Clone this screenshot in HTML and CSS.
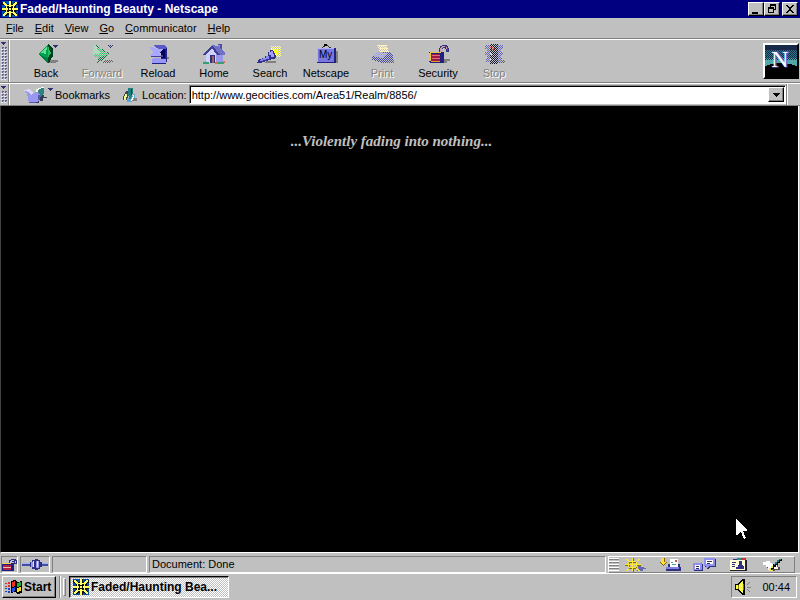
FILE: index.html
```html
<!DOCTYPE html>
<html lang="en">
<head>
    <meta charset="UTF-8">
    <meta name="viewport" content="width=device-width, initial-scale=1.0">
    <title>Faded/Haunting Beauty - Netscape</title>
    <link rel="stylesheet" href="styles.css">
</head>
<body>
    <!-- shared icon parts -->
    <svg class="defs" width="0" height="0" aria-hidden="true">
        <defs>
            <pattern id="dither" width="2" height="2" patternUnits="userSpaceOnUse">
                <path fill="#c0c0c0" d="M0 0h1v1h-1zM1 1h1v1h-1z"/>
            </pattern>
            <pattern id="sky" width="2" height="2" patternUnits="userSpaceOnUse">
                <path fill="#182848" d="M0 0h1v1h-1zM1 1h1v1h-1z"/>
            </pattern>
            <g id="helm">
                <path fill="#0050a8" d="M0 0h16v16h-16z"/>
                <path fill="#101008" d="M3 3h11v11h-11zM7 0h3v16h-3zM0 7h16v3h-16zM0 1h4v3h-4zM12 1h4v3h-4zM1 12h4v3h-4zM12 12h3v3h-3z"/>
                <path fill="#ffff66" d="M7 0h2v6h-2zM7 10h2v6h-2zM0 7h6v2h-6zM10 7h6v2h-6z"/>
                <path fill="#ffff66" d="M1 1h2v1h1v1h1v1h1v1h-1v1h-1v-1h-1v-1h-1v-1h-1zM15 1h-2v1h-1v1h-1v1h-1v1h1v1h1v-1h1v-1h1v-1h1zM1 15h2v-1h1v-1h1v-1h1v-1h-1v-1h-1v1h-1v1h-1v1h-1zM15 15h-2v-1h-1v-1h-1v-1h-1v-1h1v-1h1v1h1v1h1v1h1z"/>
                <path fill="#ffff66" d="M5 4h6v1h-6zM4 5h1v6h-1zM11 5h1v6h-1zM5 11h6v1h-6zM7 7h2v2h-2z"/>
            </g>
            <g id="drop"><path fill="#303070" d="M0 0h5v1h-1v1h-1v1h-1v-1h-1v-1h-1z"/></g>
        </defs>
    </svg>

    <header class="title-bar">
        <svg width="16" height="16" viewBox="0 0 16 16"><use href="#helm"/></svg>
        <h1>Faded/Haunting Beauty - Netscape</h1>
        <div class="window-buttons">
            <button aria-label="Minimize"><svg width="12" height="10" viewBox="0 0 12 10"><path d="M2 8h6v2h-6z"/></svg></button>
            <button aria-label="Restore"><svg width="12" height="10" viewBox="0 0 12 10"><path fill-rule="evenodd" d="M4 0h6v6h-2v3h-6v-6h2zM5 2v1h3v2h1v-3zM3 5v3h4v-3z"/></svg></button>
            <button class="close" aria-label="Close"><svg width="12" height="10" viewBox="0 0 12 10"><path d="M2 1h2v1h1v1h2v-1h1v-1h2v1h-1v1h-1v1h-1v2h1v1h1v1h1v1h-2v-1h-1v-1h-2v1h-1v1h-2v-1h1v-1h1v-1h1v-2h-1v-1h-1v-1h-1z"/></svg></button>
        </div>
    </header>

    <nav class="menu-bar">
        <a href="#"><u>F</u>ile</a>
        <a href="#"><u>E</u>dit</a>
        <a href="#"><u>V</u>iew</a>
        <a href="#"><u>G</u>o</a>
        <a href="#"><u>C</u>ommunicator</a>
        <a href="#"><u>H</u>elp</a>
    </nav>

    <div class="toolbar">
        <div class="grip"><svg width="5" height="3" viewBox="0 0 5 3"><use href="#drop"/></svg></div>
        <div class="nav-buttons">
            <button>
                <svg width="26" height="22" viewBox="0 0 26 22">
                    <path fill="#808080" d="M17 17h8v2h-2v1h-9z"/>
                    <path fill="#00a050" d="M15 1L5 11L15 15z"/>
                    <path fill="#60e090" d="M14 3L8 10L13 11z"/>
                    <path fill="#008040" d="M5 11L15 15V21z"/>
                    <path fill="#004020" d="M15 1L20 6V13L15 21V14z"/>
                    <path fill="#20c060" d="M15 3L18 10L15 15z"/>
                    <use href="#drop" x="20" y="2"/>
                </svg>
                Back
            </button>
            <button disabled>
                <svg width="26" height="22" viewBox="0 0 26 22">
                    <path fill="#606060" d="M15 17h9v2h-2v1h-10z"/>
                    <path fill="#40d078" d="M5 1L21 11L8 21L9 15L4 12z"/>
                    <path fill="#a0f0c0" d="M5 1L12 10L4 12z"/>
                    <path fill="#107038" d="M9 15L21 11L8 21z"/>
                    <path fill="none" stroke="#107038" d="M6 2L20 11"/>
                    <use href="#drop" x="19" y="2"/>
                    <path fill="url(#dither)" d="M0 0h26v22h-26z"/>
                </svg>
                Forward
            </button>
            <button>
                <svg width="26" height="22" viewBox="0 0 26 22">
                    <path fill="#808080" d="M19 14h5v2h-2v2h-5z"/>
                    <path fill="#202080" d="M15 3h6v1h1v15h-2v1h-5v-4h1v-6h-1z"/>
                    <path fill="#000060" d="M16 6h4v9h-4z"/>
                    <path fill="#5858c8" d="M9 2h11l2 3l-5 2l-7-3z"/>
                    <path fill="#a8a8ff" d="M3 4h5l4 2h6l-3 4l1 3h-11l3-4z"/>
                    <path fill="#404098" d="M5 13h11v-1h2v2h-12z"/>
                    <path fill="#9898f8" d="M8 15h7v1h6v4h-14v-4h1z"/>
                    <path fill="#202080" d="M7 20h14v1h-14z"/>
                </svg>
                Reload
            </button>
            <button>
                <svg width="26" height="22" viewBox="0 0 26 22">
                    <path fill="#5050a0" d="M17 1h4v8h-4z"/>
                    <path fill="#9090e8" d="M17 2h2v6h-2z"/>
                    <path fill="#d0d0ff" d="M5 11L11 4L17 11V20H5z"/>
                    <path fill="#9898e8" d="M15 11L22 10V19L15 20z"/>
                    <path fill="#7070c8" d="M11 2L17 3L24 10V12H18z"/>
                    <path fill="#404090" d="M11 2L2 11V12H5L11 5L16 12H19z"/>
                    <path fill="#303078" d="M9 12h5v8h-5z"/>
                    <path fill="#a06060" d="M11 13h2v7h-2z"/>
                    <path fill="#30a070" d="M2 19h6v2h-6zM16 19h7v2h-7z"/>
                    <path fill="#e07040" d="M4 18h1v2h-1zM14 19h3v2h-3zM22 18h2v2h-2z"/>
                </svg>
                Home
            </button>
            <button>
                <svg width="26" height="22" viewBox="0 0 26 22">
                    <path fill="#ffff90" d="M14 3h10v11h-10z"/>
                    <path fill="#ffff30" d="M17 6h5v6h-5z"/>
                    <path fill="url(#dither)" d="M14 2h11v4h-11zM21 4h4v10h-4zM16 12h8v3h-8z"/>
                    <path fill="#808080" d="M9 18h10v2h-12z"/>
                    <path fill="#303088" d="M2 16h3v-1h3v-2h3v-4h2v-2h3v1h1v2h1v2h1v3h-1v1h-4v1h-3v1h-3v1h-3v1h-5z"/>
                    <path fill="#8888f0" d="M4 16h2v-1h3v-2h3v3h-3v1h-3v1h-3z"/>
                    <path fill="#a0a0ff" d="M12 9h2v-1h2v3h1v3h-3v-2h-2z"/>
                </svg>
                Search
            </button>
            <button>
                <svg width="26" height="22" viewBox="0 0 26 22">
                    <path fill="none" stroke="#303030" d="M9 5L13 2L18 5"/>
                    <path fill="#000" d="M11 1h3v2h-3z"/>
                    <path fill="#808080" d="M8 8h17v12h-17z"/>
                    <path fill="#202080" d="M4 5h19v15h-19z"/>
                    <path fill="#b0b0ff" d="M4 5h17v14h-17z"/>
                    <path fill="#7878e0" d="M5 6h16v13h-16z"/>
                    <text class="my-label" x="6" y="15">My</text>
                </svg>
                Netscape
            </button>
            <button disabled>
                <svg width="26" height="22" viewBox="0 0 26 22">
                    <path fill="#606060" d="M14 17h11v3h-13z"/>
                    <path fill="#fff8d0" d="M8 2h10l2 8h-9z"/>
                    <path fill="#4848a8" d="M3 13L9 9H21L24 12V17L15 20L3 17z"/>
                    <path fill="#a0a0f0" d="M3 13L9 9L18 10L14 15z"/>
                    <path fill="url(#dither)" d="M0 0h26v22h-26z"/>
                    <path fill="#fff0b0" d="M8 2h9v1h-9zM10 5h8v1h-8zM11 8h8v1h-8z"/>
                </svg>
                Print
            </button>
            <button>
                <svg width="26" height="22" viewBox="0 0 26 22">
                    <path fill="#808080" d="M18 16h7v2h-3v2h-6z"/>
                    <path fill="#303080" d="M14 10v-5h1v-2h2v-1h5v1h1v2h1v4h-3v-3h-1v-1h-2v1h-1v4z"/>
                    <path fill="#d0a0a8" d="M15 9v-4h1v-1h1v-1h3v1h-2v1h-1v4zM21 4h1v2h-1z"/>
                    <path fill="#c02040" d="M20 3h1v1h-1zM22 5h1v3h-1z"/>
                    <path fill="#202080" d="M4 9h15v11h-14l-1-1z"/>
                    <path fill="#e8c840" d="M5 9h11v1h-11zM4 10h2v8h-2z"/>
                    <path fill="#a01848" d="M6 11h9v8h-9z"/>
                    <path fill="#d87080" d="M7 12h8v1h-8zM7 15h8v1h-8z"/>
                    <path fill="#e8a020" d="M6 18h9v1h-9z"/>
                </svg>
                Security
            </button>
            <button disabled>
                <svg width="26" height="22" viewBox="0 0 26 22">
                    <path fill="#606060" d="M18 17h6v3h-9z"/>
                    <path fill="#6868c0" d="M4 2h18v4h-2v3h2v3h-2v3h1v4h-16v-4h1v-3h-2v-3h2v-3h-2z"/>
                    <path fill="#181830" d="M9 1h8v20h-8z"/>
                    <path fill="url(#dither)" d="M0 0h26v22h-26z"/>
                    <path fill="#e04030" d="M9 4h3v1h-3zM10 6h3v1h-3zM12 5h2v1h-2z"/>
                    <path fill="#e0e0e0" d="M9 9h1v2h-1zM10 11h1v1h-1zM9 15h1v2h-1zM11 17h1v1h-1z"/>
                </svg>
                Stop
            </button>
        </div>
        <div class="throbber">
            <svg width="32" height="32" viewBox="0 0 32 32">
                <path fill="#182848" d="M0 0h32v32h-32z"/>
                <path fill="#287888" d="M0 5h32v27h-32z"/>
                <path fill="#50a8a8" d="M0 13h32v19h-32z"/>
                <path fill="url(#sky)" d="M0 4h32v11h-32z"/>
                <path fill="#000" d="M0 21Q16 15 32 21V32H0z"/>
                <text class="shade" x="7" y="22">N</text>
                <text x="6" y="22">N</text>
            </svg>
        </div>
    </div>

    <div class="location-bar">
        <div class="grip"><svg width="5" height="3" viewBox="0 0 5 3"><use href="#drop"/></svg></div>
        <button class="bookmarks">
            <svg width="30" height="18" viewBox="0 0 30 18">
                <path fill="#383858" d="M15 9h6v2h3v1h-4v3h-4v2h-4z"/>
                <path fill="#308080" d="M15 4L21 1V7L17 11L14 13z"/>
                <path fill="#f0fff0" d="M13 3h2v-1h3v-1h3v1h-3v1h-2v1h-1v5h-2z"/>
                <path fill="#9898f0" d="M0 4L7 3L10 7L14 6L17 9V15L12 16L6 17L4 8z"/>
                <path fill="#d8d8ff" d="M0 4L7 3L10 7L9 9L5 6z"/>
                <path fill="#5858b8" d="M15 9h2v5h-2zM6 16h7v1h-7z"/>
                <use href="#drop" x="25" y="2"/>
            </svg>
            Bookmarks
        </button>
        <svg class="page-proxy" width="16" height="16" viewBox="0 0 16 16">
            <path fill="#808080" d="M11 11h4v3h-6z"/>
            <path fill="#404850" d="M4 4h2v9h-5v-4h1v-2h1v-2h1z"/>
            <path fill="#f8f890" d="M3 7h2v3h-1v3h-2v-4h1z"/>
            <path fill="#58a8d8" d="M5 11h2v1h2v-3h2v-2h2v4h-1v2h-2v2h-5z"/>
            <path fill="#fff" d="M10 10h1v-2h1v3h-1v2h-1v1h-1z"/>
            <path fill="#208080" d="M6 1h5v6h-1v3h-1v2h-2v-3h-1z"/>
            <path fill="#004848" d="M9 2h1v6h-1z"/>
        </svg>
        <label for="url">Location:</label>
        <div class="url-box">
            <input type="text" id="url" value="http://www.geocities.com/Area51/Realm/8856/">
            <button aria-label="History"><svg width="7" height="4" viewBox="0 0 7 4"><path d="M0 0h7v1h-1v1h-1v1h-1v1h-1v-1h-1v-1h-1v-1h-1z"/></svg></button>
        </div>
        <div class="bar-end"></div>
    </div>

    <main class="page">
        <p>...Violently fading into nothing...</p>
    </main>

    <footer class="status-bar">
        <div class="cell lock">
            <svg width="15" height="14" viewBox="0 0 15 14">
                <path fill="#303080" d="M7 6v-4h2v-1h5v1h1v4h-3v-2h-2v2z"/>
                <path fill="#c0c0f0" d="M8 5v-2h1v-1h3v1h-2v2zM13 3h1v2h-1z"/>
                <path fill="#202080" d="M0 5h12v8h-12z"/>
                <path fill="#f0d050" d="M0 5h9v1h-9z"/>
                <path fill="#b02048" d="M1 7h8v5h-8z"/>
                <path fill="#f0c0a0" d="M1 9h8v1h-8z"/>
            </svg>
        </div>
        <div class="cell plug">
            <svg width="26" height="14" viewBox="0 0 26 14">
                <path fill="#4050a0" d="M0 6h26v2h-26z"/>
                <path fill="#a0b0ff" d="M0 5h26v1h-26z"/>
                <path fill="#303080" d="M8 4h2v-2h3v-1h3v1h2v2h2v5h-2v2h-2v1h-3v-1h-3v-2h-2z"/>
                <path fill="#9898f0" d="M9 4h3v5h-3zM14 3h3v7h-3z"/>
                <path fill="#e0e0ff" d="M11 3h1v6h-1zM15 3h1v6h-1z"/>
            </svg>
        </div>
        <div class="cell progress"></div>
        <div class="cell message">Document: Done</div>
        <div class="component-bar">
            <span class="component-grip"></span>
            <button aria-label="Navigator">
                <svg width="24" height="14" viewBox="0 0 24 14">
                    <path fill="#6868b0" d="M14 8h3v1h3v1h2v1h-3v2h-6z"/>
                    <path fill="#807000" d="M9 0h1v14h-1zM1 7h16v1h-16zM5 4h8v7h-8z"/>
                    <path fill="#c0c0c0" d="M6 5h6v5h-6z"/>
                    <path fill="#ffe830" d="M8 0h1v13h-1zM1 6h16v1h-16zM5 3h7v1h-7zM5 9h7v1h-7zM4 4h1v5h-1zM12 4h1v5h-1zM2 1h2v1h1v1h-2v-1h-1zM13 2h1v-1h2v1h-1v1h-2zM2 12h1v-1h2v1h-1v1h-2zM12 10h2v1h1v1h1v1h-2v-1h-1v-1h-1z"/>
                </svg>
            </button>
            <button aria-label="Inbox">
                <svg width="24" height="14" viewBox="0 0 24 14">
                    <path fill="#806000" d="M3 0h4v4h2l-4 4l-4-4h2z"/>
                    <path fill="#ffe030" d="M3 0h3v4h2l-3 3l-3-3h1z"/>
                    <path fill="#303080" d="M8 9h2v-3h12v3h1v4h-15z"/>
                    <path fill="#8080e0" d="M8 9h13v2h-13z"/>
                    <path fill="#fff" d="M12 1h8v8h-8z"/>
                    <path fill="#d05060" d="M17 2h2v2h-2z"/>
                    <path fill="#50a090" d="M13 4h2v1h-2zM14 6h4v1h-4z"/>
                </svg>
            </button>
            <button aria-label="Discussions">
                <svg width="24" height="14" viewBox="0 0 24 14">
                    <path fill="#303080" d="M2 6h9v7h-9zM13 1h11v8h-6v1h-1v1h-2v-2h-2z"/>
                    <path fill="#9090f0" d="M1 5h8v-1h1v8h-9zM12 0h11v8h-6v1h-1v1h-2v-2h-2z"/>
                    <path fill="#fff" d="M3 7h5v4h-5zM14 2h7v4h-7z"/>
                    <path fill="#303060" d="M4 8h3v1h-3zM4 10h3v1h-3zM15 3h5v1h-5zM15 5h3v1h-3z"/>
                </svg>
            </button>
            <button aria-label="Address Book">
                <svg width="24" height="14" viewBox="0 0 24 14">
                    <path fill="#202030" d="M4 2h17v11h-17z"/>
                    <path fill="#ffffd8" d="M4 2h15v10h-15z"/>
                    <path fill="#303080" d="M7 1h4v1h-4z"/><path fill="#209090" d="M11 0h4v2h-4z"/><path fill="#d03030" d="M15 0h5v2h-5z"/>
                    <path fill="#303080" d="M6 4h4v1h-4zM6 6h3v1h-3zM6 8h3v1h-3zM13 3h3v4h-3zM12 7h5v1h1v3h-8v-2h2z"/>
                </svg>
            </button>
            <button aria-label="Composer">
                <svg width="24" height="14" viewBox="0 0 24 14">
                    <path fill="#505050" d="M6 6h12v3h2v3h-5v1h-6v-3h-2z"/>
                    <path fill="#fff" d="M3 4h3v-1h4v2h2v1h5v3h1v2h-6v1h-4v-3h-2v-2h-3z"/>
                    <path fill="#000" d="M19 1h3v2h-2v2h-2v2h-2v2h-2v2h-2v2h-2v-3h1v-2h2v-2h2v-2h2v-2h2z"/>
                    <path fill="#208080" d="M19 1h2v1h-2v2h-2v2h-2v1h-1v-1h1v-2h2v-2h2z"/>
                    <path fill="#ffe830" d="M11 8h2v2h-2v2h2v1h-4v-3h2z"/>
                </svg>
            </button>
        </div>
    </footer>

    <div class="taskbar">
        <button class="start">
            <svg width="18" height="16" viewBox="0 0 18 16">
                <path fill="#000" d="M6 2L10 1L13 3L17 2V14L13 15L10 13L6 14z"/>
                <path fill="#f03020" d="M7 3L10 2V7L7 8z"/>
                <path fill="#20b030" d="M12 4L16 3V7L12 8z"/>
                <path fill="#2050f0" d="M7 9L10 8V12L7 13z"/>
                <path fill="#f8e020" d="M12 9L16 8V12L12 13z"/>
                <path fill="#e03020" d="M0 4h2v1h-2zM3 3h2v2h-2zM0 7h2v1h-2zM3 6h2v2h-2z"/>
                <path fill="#2040d0" d="M0 9h2v1h-2zM3 9h2v2h-2zM0 12h2v1h-2zM3 12h2v2h-2z"/>
            </svg>
            Start
        </button>
        <span class="divider"></span>
        <span class="handle"></span>
        <button class="task">
            <svg width="16" height="16" viewBox="0 0 16 16"><use href="#helm"/></svg>
            <span>Faded/Haunting Bea...</span>
        </button>
        <div class="tray">
            <svg width="16" height="16" viewBox="0 0 16 16">
                <path fill="#000" d="M0 5h3v-1h1v-1h1v-1h1v-1h1v-1h3v16h-3v-1h-1v-1h-1v-1h-1v-1h-1v-1h-3z"/>
                <path fill="#f8f848" d="M1 6h3v-1h1v-1h1v-1h1v-1h1v12h-1v-1h-1v-1h-1v-1h-1v-1h-3z"/>
                <path fill="#fff" d="M2 7h1v2h-1zM6 5h1v3h-1z"/>
                <path fill="#808000" d="M3 6h1v4h-1zM8 5h1v6h-1z"/>
                <path fill="#808080" d="M12 5h1v-1h1v-1h1v1h-1v1h-1v1h-1zM12 8h4v1h-4zM12 10h1v1h1v1h1v1h-1v-1h-1v-1h-1z"/>
            </svg>
            <time>00:44</time>
        </div>
    </div>

    <svg class="cursor" width="12" height="21" viewBox="0 0 12 21" aria-hidden="true">
        <path fill="#fff" d="M0 0L11 11V12H7L10 19L8 20L5 13L1 16H0z"/>
    </svg>
</body>
</html>
```
FILE: styles.css
```css
* {
    box-sizing: border-box;
}
body {
    margin: 0;
    min-height: 100vh;
    display: flex;
    flex-direction: column;
    background: #c0c0c0;
    color: #000;
    font: 11px/14px "Liberation Sans", Arial, sans-serif;
    overflow: hidden;
}
svg {
    display: block;
    flex: none;
    shape-rendering: crispEdges;
}
.defs {
    position: absolute;
}
button {
    margin: 0;
    padding: 0;
    border: none;
    background: none;
    color: inherit;
    font: inherit;
}

/* title bar */
.title-bar {
    display: flex;
    align-items: center;
    height: 18px;
    padding: 0 2px;
    background: #000080;
    color: #fff;
}
h1 {
    flex: 1;
    margin: 0 0 0 2px;
    font-size: 12px;
    line-height: 18px;
}
.window-buttons {
    display: flex;
}
.window-buttons button {
    width: 16px;
    height: 14px;
    display: flex;
    align-items: center;
    justify-content: center;
}
.window-buttons .close {
    margin-left: 2px;
}
.window-buttons button, .url-box button, .start {
    background: #c0c0c0;
    border: 1px solid;
    border-color: #fff #000 #000 #fff;
    box-shadow: inset -1px -1px #808080;
}

/* menu */
.menu-bar {
    display: flex;
    gap: 11px;
    height: 21px;
    padding: 3px 6px 0;
    border-bottom: 1px solid #808080;
}
.menu-bar a {
    color: #000;
    text-decoration: none;
}

/* toolbars */
.toolbar, .location-bar {
    display: flex;
    border-top: 1px solid #fff;
    border-bottom: 1px solid #808080;
}
.toolbar {
    height: 44px;
}
.location-bar {
    height: 23px;
    align-items: center;
}
.grip {
    width: 9px;
    align-self: stretch;
    padding: 2px 1px;
    border-right: 1px solid #808080;
    box-shadow: 1px 0 #fff;
}
.grip::after {
    content: "";
    display: block;
    height: calc(100% - 5px);
    margin-top: 2px;
    background: conic-gradient(#606090 25%, #c0c0c0 0 50%, #e8e8ff 0 75%, #c0c0c0 0) 0 0 / 3px 3px;
}
.nav-buttons {
    display: flex;
    flex: 1;
    padding-left: 9px;
}
.nav-buttons button {
    width: 56px;
    padding-top: 3px;
    display: flex;
    flex-direction: column;
    align-items: center;
    gap: 1px;
}
button:disabled {
    color: #808080;
    text-shadow: 1px 1px #fff;
}
.my-label {
    font-size: 10px;
    fill: #000;
}
.throbber {
    align-self: center;
    margin-right: 1px;
    border: 2px solid;
    border-color: #fff #000 #000 #fff;
}
.throbber text {
    font: 24px "Liberation Serif", serif;
    fill: #fff;
}
.throbber .shade {
    fill: #6060d0;
    stroke: #6060d0;
}
.bookmarks {
    display: flex;
    align-items: center;
    margin: 0 12px 0 14px;
    gap: 2px;
}
.page-proxy {
    margin-right: 4px;
}
.url-box {
    display: flex;
    flex: 1;
    height: 19px;
    margin-left: 2px;
    background: #fff;
    border: 1px solid;
    border-color: #808080 #fff #fff #808080;
    box-shadow: inset 1px 1px #000;
}
.url-box input {
    flex: 1;
    min-width: 0;
    padding: 0 2px;
    border: none;
    outline: none;
    background: none;
    font: inherit;
}
.url-box button {
    width: 16px;
    margin: 1px 1px 1px 0;
    display: flex;
    align-items: center;
    justify-content: center;
}
.bar-end {
    width: 14px;
    align-self: stretch;
    border-left: 1px solid #808080;
    box-shadow: inset 1px 0 #fff;
}

/* document */
.page {
    flex: 1;
    background: #000;
    color: #c0c0c0;
    border-left: 1px solid #404040;
    border-right: 1px solid #fff;
    border-bottom: 1px solid #fff;
    margin-right: 1px;
    padding-right: 16px;
    text-align: center;
}
.page p {
    margin: 26px 0 0;
    font: italic bold 15px/18px "Liberation Serif", "Times New Roman", serif;
}

/* status bar */
.status-bar {
    display: flex;
    gap: 2px;
    height: 20px;
    padding: 3px 5px 0 1px;
}
.cell {
    height: 17px;
    border: 1px solid;
    border-color: #808080 #fff #fff #808080;
}
.lock {
    width: 17px;
    padding: 1px 0;
}
.plug {
    width: 30px;
    padding: 1px;
}
.progress {
    width: 95px;
}
.message {
    flex: 1;
    padding-left: 2px;
}
.component-bar {
    display: flex;
    align-items: center;
    height: 17px;
    padding-right: 5px;
    border: 1px solid;
    border-color: #fff #808080 #808080 #fff;
}
.component-grip {
    width: 10px;
    height: 13px;
    background: repeating-linear-gradient(#fff 0 1px, #808080 1px 2px, #c0c0c0 2px 3px);
}
.component-bar button {
    width: 34px;
    display: flex;
    justify-content: center;
}

/* taskbar */
.taskbar {
    display: flex;
    align-items: center;
    height: 27px;
    padding: 0 3px 0 2px;
    border-top: 1px solid #fff;
    font-size: 12px;
}
.start, .task {
    display: flex;
    align-items: center;
    height: 22px;
    font-weight: bold;
}
.start {
    width: 54px;
    padding-left: 2px;
    gap: 1px;
}
.divider {
    width: 2px;
    height: 22px;
    margin: 0 2px 0 3px;
    border-left: 1px solid #808080;
    border-right: 1px solid #fff;
}
.handle {
    width: 3px;
    height: 18px;
    margin-right: 3px;
    border: 1px solid;
    border-color: #fff #808080 #808080 #fff;
}
.task {
    width: 160px;
    padding-left: 3px;
    gap: 2px;
    border: 1px solid;
    border-color: #000 #fff #fff #000;
    box-shadow: inset 1px 1px #808080;
    background: repeating-conic-gradient(#fff 0 25%, #c0c0c0 0 50%) 0 0 / 2px 2px;
}
.tray {
    display: flex;
    align-items: center;
    gap: 11px;
    height: 22px;
    margin-left: auto;
    padding: 0 6px 0 3px;
    border: 1px solid;
    border-color: #808080 #fff #fff #808080;
    font-size: 11px;
}

.cursor {
    position: absolute;
    left: 92%;
    top: 519px;
}
```
